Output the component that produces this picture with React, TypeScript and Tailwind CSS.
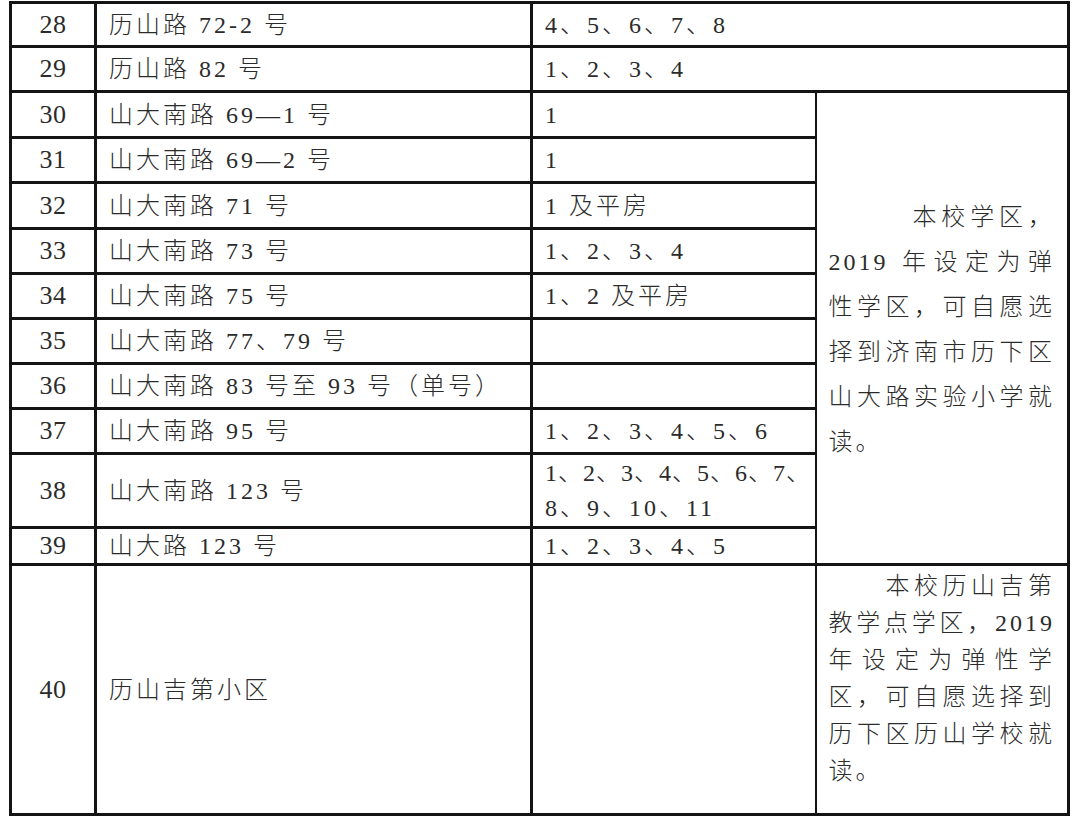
type Row = {
  no: string;
  addr: string;
  bld: React.ReactNode;
  h: string;
  wide?: boolean;
};

const rows: Row[] = [
  { no: "28", addr: "历山路 72-2 号", bld: "4、5、6、7、8", h: "h-[44px]", wide: true },
  { no: "29", addr: "历山路 82 号", bld: "1、2、3、4", h: "h-[45px]", wide: true },
  { no: "30", addr: "山大南路 69—1 号", bld: "1", h: "h-[46px]" },
  { no: "31", addr: "山大南路 69—2 号", bld: "1", h: "h-[45px]" },
  { no: "32", addr: "山大南路 71 号", bld: "1 及平房", h: "h-[46px]" },
  { no: "33", addr: "山大南路 73 号", bld: "1、2、3、4", h: "h-[45px]" },
  { no: "34", addr: "山大南路 75 号", bld: "1、2 及平房", h: "h-[45px]" },
  { no: "35", addr: "山大南路 77、79 号", bld: "", h: "h-[45px]" },
  { no: "36", addr: "山大南路 83 号至 93 号（单号）", bld: "", h: "h-[45px]" },
  { no: "37", addr: "山大南路 95 号", bld: "1、2、3、4、5、6", h: "h-[45px]" },
  {
    no: "38",
    addr: "山大南路 123 号",
    bld: (
      <span className="block leading-[35px]">
        <span className="tracking-[1px]">1、2、3、4、5、6、7、</span>
        <br />
        8、9、10、11
      </span>
    ),
    h: "h-[74px]",
  },
  { no: "39", addr: "山大路 123 号", bld: "1、2、3、4、5", h: "h-[37px]" },
];

function Note({ lines, indent, leading }: { lines: string[]; indent: string; leading: string }) {
  return (
    <div className={leading}>
      {lines.map((line, i) => (
        <div
          key={i}
          className={
            i === lines.length - 1
              ? "text-left"
              : `text-justify [text-align-last:justify] ${i === 0 ? indent : ""}`
          }
        >
          {line}
        </div>
      ))}
    </div>
  );
}

export default function App() {
  const cell = "border-[3px] border-[#141414] align-middle leading-[30px]";
  const num = `${cell} p-0 text-center text-[26px] tracking-[0.5px]`;
  return (
    <div className="min-h-screen bg-white pt-px text-[24px] font-light tracking-[3px] text-[#2b2b2b] font-[family-name:'Liberation_Serif','Noto_Sans_CJK_SC',serif]">
      <table className="ml-[9px] w-[1058px] table-fixed border-collapse border-[3px] border-[#141414]">
        <colgroup>
          <col className="w-[85px]" />
          <col className="w-[436px]" />
          <col className="w-[284px]" />
          <col className="w-[253px]" />
        </colgroup>
        <tbody>
          {rows.map((r, i) => (
            <tr key={r.no} className={r.h}>
              <td className={num}>{r.no}</td>
              <td className={`${cell} px-3 py-0 whitespace-nowrap`}>{r.addr}</td>
              <td
                colSpan={r.wide ? 2 : 1}
                className={`${cell} px-3 py-0 whitespace-nowrap ${r.wide ? "" : "border-r-2"}`}
              >
                {r.bld}
              </td>
              {i === 2 ? (
                <td rowSpan={10} className="border-[3px] border-l-2 border-[#141414] px-3 pt-[102px] align-top">
                  <Note
                    indent="pl-[84px]"
                    leading="leading-[45px]"
                    lines={[
                      "本校学区，",
                      "2019 年设定为弹",
                      "性学区，可自愿选",
                      "择到济南市历下区",
                      "山大路实验小学就",
                      "读。",
                    ]}
                  />
                </td>
              ) : null}
            </tr>
          ))}
          <tr className="h-[250px]">
            <td className={num}>40</td>
            <td className={`${cell} px-3 py-0`}>历山吉第小区</td>
            <td className={`${cell} border-r-2 p-0`} />
            <td className="border-[3px] border-l-2 border-[#141414] px-3 pt-[2px] align-top">
              <Note
                indent="pl-[57px]"
                leading="leading-[37px]"
                lines={[
                  "本校历山吉第",
                  "教学点学区，2019",
                  "年设定为弹性学",
                  "区，可自愿选择到",
                  "历下区历山学校就",
                  "读。",
                ]}
              />
            </td>
          </tr>
        </tbody>
      </table>
    </div>
  );
}
